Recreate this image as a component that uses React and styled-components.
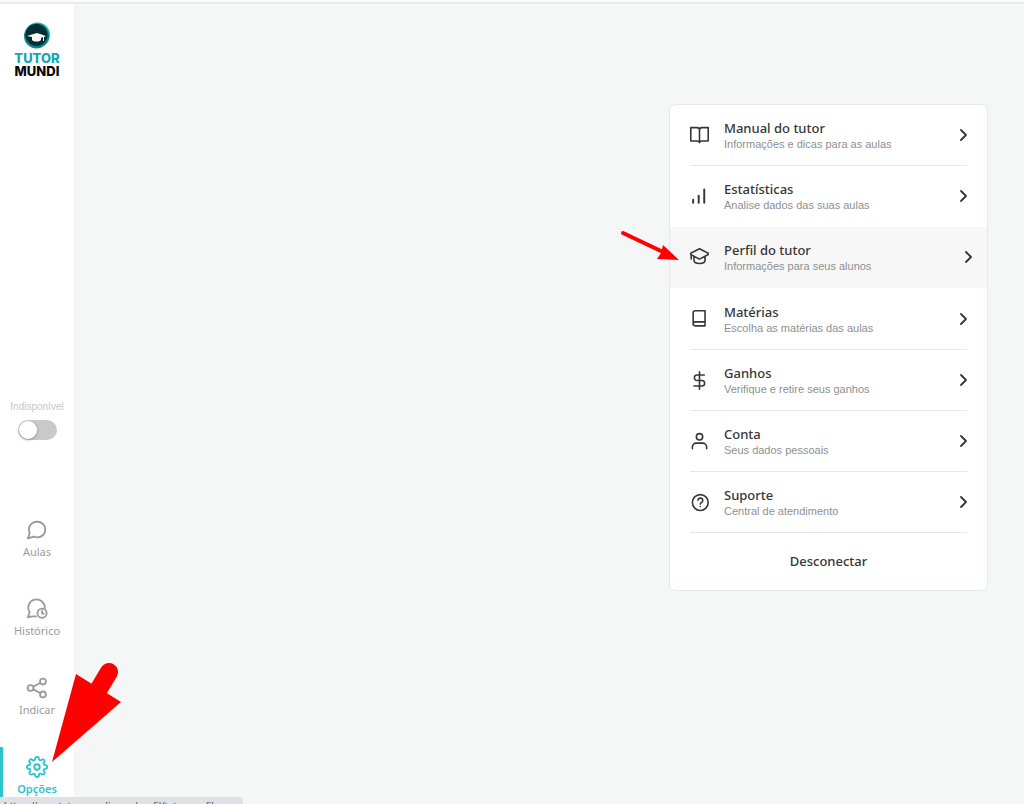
import React from 'react';
import styled, { createGlobalStyle, css } from 'styled-components';

const GlobalStyle = createGlobalStyle`
    * {
        box-sizing: border-box;
    }
    body {
        margin: 0;
        background: #f5f7f7;
        color: #363636;
        font-family: "Noto Sans", sans-serif;
    }
`;

const Shell = styled.div`
    display: flex;
    flex-direction: column;
    min-height: 100vh;
`;

const TopEdge = styled.div`
    height: 4px;
    border-bottom: 2px solid #e9ebeb;
    background: #fcfcfc;
`;

const Page = styled.div`
    display: flex;
    flex: 1;
`;

const Sidebar = styled.aside`
    display: flex;
    flex-direction: column;
    align-items: center;
    width: 74px;
    padding-top: 18px;
    background: #fff;
`;

const LogoLink = styled.a`
    display: flex;
    flex-direction: column;
    align-items: center;
    font: 800 13px/13px Inter, sans-serif;
    text-decoration: none;
`;

const LogoMark = styled.svg`
    display: block;
    margin-bottom: 2px;
`;

const LogoName = styled.span`
    color: ${props => props.$teal ? '#17a5b0' : '#080808'};
`;

const Availability = styled.label`
    display: flex;
    flex-direction: column;
    align-items: center;
    gap: 6px;
    margin-top: auto;
    color: #c6c6c6;
    font-family: "Liberation Sans", sans-serif;
    font-size: 10px;
    line-height: 14px;
    cursor: pointer;
`;

const Switch = styled.input`
    appearance: none;
    width: 39px;
    height: 20px;
    margin: 0;
    border-radius: 10px;
    background: #c9c9c9;
    cursor: pointer;
    &::before {
        content: "";
        display: block;
        width: 18px;
        height: 18px;
        margin: 1px;
        border-radius: 50%;
        background: #fff;
        box-shadow: 0 1px 3px rgba(0, 0, 0, 0.3);
    }
    &:checked {
        background: #29c4cf;
    }
    &:checked::before {
        margin-left: 20px;
    }
`;

const SideNav = styled.nav`
    display: flex;
    flex-direction: column;
    gap: 22px;
    width: 100%;
    margin-top: 70px;
`;

const NavLink = styled.a`
    display: flex;
    flex-direction: column;
    align-items: center;
    gap: 3px;
    height: 57px;
    padding-top: 9px;
    color: #9b9b9b;
    font-size: 11px;
    line-height: 16px;
    text-decoration: none;
    ${props => props.$active && css`
        color: #29c4cf;
        font-weight: 600;
        box-shadow: inset 3px 0 #29c4cf;
    `}
`;

const Content = styled.main`
    flex: 1;
    padding: 100px 36px 0 20px;
`;

const Menu = styled.section`
    width: 319px;
    margin-left: auto;
    border: 1px solid #e6e9e9;
    border-radius: 7px;
    background: #fff;
    overflow: hidden;
`;

const MenuList = styled.ul`
    margin: 0;
    padding: 0;
    list-style: none;
`;

const MenuItem = styled.li`
    padding: 0 20px;
    ${props => props.$selected && css`
        padding: 0 15px 0 20px;
        border-bottom: 1px solid #fff;
        background: #f7f7f7;
    `}
`;

const MenuLink = styled.a`
    display: flex;
    align-items: center;
    gap: 15px;
    height: 61px;
    border-bottom: 1px solid ${props => props.$line ? '#e6e6e6' : 'transparent'};
    color: #363636;
    text-decoration: none;
`;

const MenuText = styled.span`
    display: flex;
    flex: 1;
    flex-direction: column;
    padding-top: 2px;
`;

const MenuTitle = styled.span`
    font-size: 13px;
    font-weight: 500;
    line-height: 17px;
`;

const MenuHint = styled.span`
    color: #8f8f8f;
    font-family: "Liberation Sans", sans-serif;
    font-size: 11px;
    line-height: 15px;
`;

const LogoutButton = styled.button`
    display: block;
    width: 100%;
    height: 57px;
    padding: 0;
    border: 0;
    background: none;
    color: #363636;
    font: 500 13px/17px "Noto Sans", sans-serif;
    cursor: pointer;
`;

const StrokeSvg = styled.svg`
    display: block;
    flex: none;
    fill: none;
    stroke: currentColor;
    stroke-linecap: round;
    stroke-linejoin: round;
`;

const Pointer = styled.svg`
    position: fixed;
    left: ${props => props.$left}px;
    top: ${props => props.$top}px;
    pointer-events: none;
`;

const StatusBar = styled.div`
    position: fixed;
    left: 0;
    bottom: 0;
    width: 243px;
    height: 7px;
    padding: 3px 0 0 4px;
    border-radius: 0 4px 0 0;
    background: #dee1e6;
    color: #5f5a60;
    font-family: "Liberation Sans", sans-serif;
    font-size: 11px;
    line-height: 13px;
    white-space: nowrap;
    overflow: hidden;
`;

function Icon({ children, size = 19, weight = 2 }) {
    return (
        <StrokeSvg width={size} height={size} viewBox="0 0 24 24" strokeWidth={weight} aria-hidden="true">
            {children}
        </StrokeSvg>
    );
}

const icons = {
    manual: <path d="M1 2h8a3 3 0 0 1 3 3v16M1 2v17h8q3 0 3 2M23 2h-8a3 3 0 0 0-3 3M23 2v17h-8q-3 0-3 2" />,
    stats: <path strokeWidth="2.500" d="M4 20v-4M11 20v-9M18 20V3" />,
    profile: <path d="M12 1-.5 7.500l12.500 6.500 12.500-6.500zM5 11v4c0 6 14 6 14 0v-4M1.500 9v5" />,
    subjects: <path d="M4 18.500V3.500A2.500 2.500 0 0 1 6.500 1H19v19H6.500a2 2 0 0 1 0-5H19" />,
    earnings: <path d="M12 1v22M18 5H9a3.500 3.500 0 0 0 0 7h6a3.500 3.500 0 0 1 0 7H5" />,
    account: <><circle cx="12" cy="6" r="4" /><path d="M3 21v-2a5 5 0 0 1 5-5h8a5 5 0 0 1 5 5v2" /></>,
    support: <><circle cx="13" cy="12" r="10" /><path d="M10 9a3 3 0 0 1 6 1c0 2-3 2.300-3 4M13 17h.01" /></>,
    lessons: <path d="M21 11.500a8.400 8.400 0 0 1-.9 3.800 8.500 8.500 0 0 1-7.600 4.700 8.400 8.400 0 0 1-3.800-.9L2 21l2.100-5.700a8.400 8.400 0 0 1-.9-3.800A8.500 8.500 0 0 1 7.900 3.900a8.400 8.400 0 0 1 3.800-.9h.5a8.500 8.500 0 0 1 8.800 8z" />,
    history: <><path d="M11 20H7l-5 1 2-5.500A9 9 0 1 1 20.500 11" /><circle cx="17.500" cy="16.500" r="5" /><path d="M17.500 14v3h2" /></>,
    share: <><circle cx="18.500" cy="5" r="3.200" /><circle cx="5" cy="12" r="3.200" /><circle cx="18.500" cy="19" r="3.200" /><path d="m8 13.500 7.500 4M15.500 6.500l-7.500 4" /></>,
    options: <><circle cx="12" cy="12" r="3" /><path d="M19.400 15a1.650 1.650 0 0 0 .33 1.820l.06.06a2 2 0 1 1-2.830 2.830l-.06-.06a1.650 1.650 0 0 0-1.820-.33 1.650 1.650 0 0 0-1 1.510V21a2 2 0 0 1-4 0v-.09A1.650 1.650 0 0 0 9 19.400a1.650 1.650 0 0 0-1.820.33l-.06.06a2 2 0 1 1-2.830-2.830l.06-.06a1.650 1.650 0 0 0 .33-1.820 1.650 1.650 0 0 0-1.510-1H3a2 2 0 0 1 0-4h.09A1.650 1.650 0 0 0 4.600 9a1.650 1.650 0 0 0-.33-1.820l-.06-.06a2 2 0 1 1 2.830-2.830l.06.06a1.650 1.650 0 0 0 1.820.33H9a1.650 1.650 0 0 0 1-1.510V3a2 2 0 0 1 4 0v.09a1.650 1.650 0 0 0 1 1.510 1.650 1.650 0 0 0 1.820-.33l.06-.06a2 2 0 1 1 2.830 2.830l-.06.06a1.650 1.650 0 0 0-.33 1.820V9a1.650 1.650 0 0 0 1.510 1H21a2 2 0 0 1 0 4h-.09a1.650 1.650 0 0 0-1.510 1z" /></>
};

const menuItems = [
    { icon: 'manual', title: 'Manual do tutor', hint: 'Informações e dicas para as aulas', line: true },
    { icon: 'stats', title: 'Estatísticas', hint: 'Analise dados das suas aulas' },
    { icon: 'profile', title: 'Perfil do tutor', hint: 'Informações para seus alunos', selected: true },
    { icon: 'subjects', title: 'Matérias', hint: 'Escolha as matérias das aulas', line: true },
    { icon: 'earnings', title: 'Ganhos', hint: 'Verifique e retire seus ganhos', line: true },
    { icon: 'account', title: 'Conta', hint: 'Seus dados pessoais', line: true },
    { icon: 'support', title: 'Suporte', hint: 'Central de atendimento', line: true }
];

const navItems = [
    { icon: 'lessons', label: 'Aulas' },
    { icon: 'history', label: 'Histórico' },
    { icon: 'share', label: 'Indicar' },
    { icon: 'options', label: 'Opções', active: true }
];

function Logo() {
    return (
        <LogoLink href="#inicio">
            <LogoMark width="28" height="28" viewBox="0 0 28 28" aria-hidden="true">
                <circle cx="14.500" cy="13" r="12.500" fill="#20b2ba" />
                <circle cx="13.500" cy="14" r="12.500" fill="#0a858d" />
                <circle cx="13.500" cy="13" r="11" fill="#032f35" />
                <path d="m4 14 10-3 9 3-2 1v4h-1v-4l-2 1v2c-2 2-7 2-9 0v-3z" fill="#fff" />
            </LogoMark>
            <LogoName $teal>TUTOR</LogoName>
            <LogoName>MUNDI</LogoName>
        </LogoLink>
    );
}

function OptionsMenu() {
    return (
        <Menu>
            <MenuList>
                {menuItems.map(item => (
                    <MenuItem key={item.icon} $selected={item.selected}>
                        <MenuLink href={'#' + item.icon} $line={item.line}>
                            <Icon>{icons[item.icon]}</Icon>
                            <MenuText>
                                <MenuTitle>{item.title}</MenuTitle>
                                <MenuHint>{item.hint}</MenuHint>
                            </MenuText>
                            <StrokeSvg width="8" height="12" viewBox="0 0 8 12" strokeWidth="1.800" aria-hidden="true">
                                <path d="m2 1 5 5-5 5" />
                            </StrokeSvg>
                        </MenuLink>
                    </MenuItem>
                ))}
            </MenuList>
            <LogoutButton type="button">Desconectar</LogoutButton>
        </Menu>
    );
}

export default function App() {
    return (
        <Shell>
            <GlobalStyle />
            <TopEdge />
            <Page>
                <Sidebar>
                    <Logo />
                    <Availability>
                        Indisponível
                        <Switch type="checkbox" role="switch" />
                    </Availability>
                    <SideNav>
                        {navItems.map(item => (
                            <NavLink key={item.icon} href={'#' + item.icon} $active={item.active}>
                                <Icon size={22}>{icons[item.icon]}</Icon>
                                {item.label}
                            </NavLink>
                        ))}
                    </SideNav>
                </Sidebar>
                <Content>
                    <OptionsMenu />
                </Content>
            </Page>
            <Pointer $left={618} $top={228} width="62" height="36" viewBox="0 0 62 36" aria-hidden="true">
                <path d="m5 5 38 18" stroke="#f00" strokeWidth="4" strokeLinecap="round" />
                <path d="m45 17 16 15-22-1 4-6z" fill="#f00" />
            </Pointer>
            <Pointer $left={50} $top={661} width="74" height="104" viewBox="0 0 74 104" aria-hidden="true">
                <path d="M59 11 47 31" stroke="#f00" strokeWidth="18" strokeLinecap="round" />
                <path d="m2 101 24-88 45 28z" fill="#f00" />
            </Pointer>
            <StatusBar>https://app.tutormundi.com/perfil/tutor-profile</StatusBar>
        </Shell>
    );
}
